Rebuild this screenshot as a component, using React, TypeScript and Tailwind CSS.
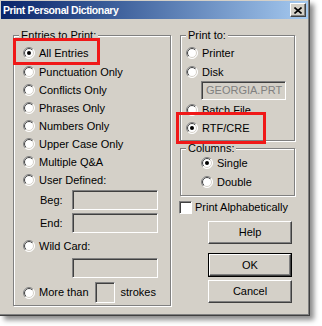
import React from 'react';

// Classic sunken radio button
const RadioDot: React.FC<{ checked?: boolean }> = ({ checked }) => (
  <svg width="12" height="12" viewBox="0 0 12 12" className="shrink-0">
    <defs>
      <linearGradient id="rb-outer" x1="0" y1="0" x2="1" y2="1">
        <stop offset="50%" stopColor="#808080" />
        <stop offset="50%" stopColor="#ffffff" />
      </linearGradient>
      <linearGradient id="rb-inner" x1="0" y1="0" x2="1" y2="1">
        <stop offset="50%" stopColor="#404040" />
        <stop offset="50%" stopColor="#d4d0c8" />
      </linearGradient>
    </defs>
    <circle cx="6" cy="6" r="5.5" fill="#fff" stroke="url(#rb-outer)" strokeWidth="1" />
    <circle cx="6" cy="6" r="4.5" fill="#fff" stroke="url(#rb-inner)" strokeWidth="1" />
    {checked && <circle cx="6" cy="6" r="2" fill="#000" />}
  </svg>
);

interface RadioProps {
  label: string;
  checked?: boolean;
  className?: string;
}

const Radio: React.FC<RadioProps> = ({ label, checked, className = '' }) => (
  <div className={`flex items-center h-[18px] gap-[4px] ${className}`}>
    <RadioDot checked={checked} />
    <span className="leading-none whitespace-nowrap">{label}</span>
  </div>
);

// Etched group box with caption
const GroupBox: React.FC<{ title: string; className?: string; children: React.ReactNode }> = ({
  title,
  className = '',
  children,
}) => (
  <div
    className={`relative border border-[#808080] shadow-[inset_1px_1px_0_#fff,1px_1px_0_#fff] ${className}`}
  >
    <span className="absolute -top-[7px] left-[5px] bg-[#d4d0c8] px-[2px] leading-[13px]">{title}</span>
    {children}
  </div>
);

// Disabled sunken edit field
const TextBox: React.FC<{ value?: string; className?: string }> = ({ value, className = '' }) => (
  <div
    className={`border-t border-l border-[#808080] border-r-[#fff] border-b-[#fff] border-r border-b shadow-[inset_1px_1px_0_#404040] bg-[#d4d0c8] text-[#808080] flex items-center pl-[4px] ${className}`}
  >
    {value}
  </div>
);

const Button: React.FC<{ label: string; isDefault?: boolean }> = ({ label, isDefault }) => {
  const face = (
    <div className="flex-1 flex items-center justify-center border-t border-l border-t-white border-l-white border-r border-b border-r-[#404040] border-b-[#404040] shadow-[inset_-1px_-1px_0_#808080] bg-[#d4d0c8]">
      {label}
    </div>
  );
  return isDefault ? (
    <div className="w-[84px] h-[24px] border border-black flex">{face}</div>
  ) : (
    <div className="w-[84px] h-[23px] flex">{face}</div>
  );
};

export default function App() {
  return (
    <div className="w-[322px] h-[326px] bg-white relative overflow-hidden font-['Liberation_Sans',Arial,sans-serif] text-[11px] text-black">
      {/* Dialog window */}
      <div className="w-[310px] h-[316px] bg-[#d4d0c8] flex flex-col pt-[1px] pl-[1px] border-r border-b border-[#404040] shadow-[inset_-1px_-1px_0_#808080,4px_4px_5px_rgba(0,0,0,0.45)]">
        {/* Title bar */}
        <div className="h-[18px] mr-[1px] flex items-center justify-between bg-gradient-to-r from-[#0a246a] to-[#a6caf0] pl-[2px] pr-[2px]">
          <span className="text-white font-bold text-[10.5px] tracking-[-0.4px] leading-none">
            Print Personal Dictionary
          </span>
          <div className="w-[16px] h-[14px] flex items-center justify-center bg-[#d4d0c8] border-t border-l border-t-white border-l-white border-r border-b border-r-[#404040] border-b-[#404040] shadow-[inset_-1px_-1px_0_#808080]">
            <svg width="8" height="7" viewBox="0 0 8 7">
              <path d="M0.5 0.5 L7.5 6.5 M7.5 0.5 L0.5 6.5" stroke="#000" strokeWidth="1.6" />
            </svg>
          </div>
        </div>

        {/* Body */}
        <div className="flex pt-[16px] pl-[12px]">
          {/* Entries to Print */}
          <GroupBox title="Entries to Print:" className="w-[158px] h-[271px] shrink-0">
            <div className="flex flex-col pt-[8px] pl-[9px]">
              <Radio label="All Entries" checked />
              <Radio label="Punctuation Only" className="mt-[1px]" />
              <Radio label="Conflicts Only" />
              <Radio label="Phrases Only" />
              <Radio label="Numbers Only" />
              <Radio label="Upper Case Only" className="h-[17px]" />
              <Radio label="Multiple Q&A" />
              <Radio label="User Defined:" className="h-[16px]" />
              <div className="flex items-center h-[20px] mt-[1px]">
                <span className="w-[17px]" />
                <span className="w-[32px]">Beg:</span>
                <TextBox className="w-[86px] h-[20px]" />
              </div>
              <div className="flex items-center h-[20px] mt-[3px]">
                <span className="w-[17px]" />
                <span className="w-[32px]">End:</span>
                <TextBox className="w-[86px] h-[20px]" />
              </div>
              <Radio label="Wild Card:" className="mt-[4px]" />
              <div className="flex h-[20px] mt-[3px] pl-[49px]">
                <TextBox className="w-[86px] h-[20px]" />
              </div>
              <div className="flex items-center h-[21px] mt-[4px] gap-[4px]">
                <RadioDot />
                <span>More than</span>
                <TextBox className="w-[20px] h-[21px] ml-[2px]" />
                <span className="ml-[2px]">strokes</span>
              </div>
            </div>
          </GroupBox>

          {/* Right column */}
          <div className="w-[115px] ml-[9px] flex flex-col shrink-0">
            <GroupBox title="Print to:" className="h-[106px]">
              <div className="flex flex-col pt-[8px] pl-[5px]">
                <Radio label="Printer" />
                <Radio label="Disk" className="mt-[1px]" />
                <div className="pl-[15px]">
                  <TextBox value="GEORGIA.PRT" className="w-[85px] h-[19px]" />
                </div>
                <Radio label="Batch File" className="mt-[1px]" />
                <Radio label="RTF/CRE" checked className="h-[16px]" />
              </div>
            </GroupBox>

            <GroupBox title="Columns:" className="h-[48px] mt-[7px]">
              <div className="flex flex-col pt-[5px] pl-[20px]">
                <Radio label="Single" checked />
                <Radio label="Double" className="mt-[1px]" />
              </div>
            </GroupBox>

            <div className="flex items-center h-[14px] mt-[4px] gap-[3px] -ml-[1px]">
              <div className="w-[13px] h-[13px] bg-white border-t border-l border-[#808080] border-r-white border-b-white border-r border-b shadow-[inset_1px_1px_0_#404040]" />
              <span>Print Alphabetically</span>
            </div>

            <div className="flex flex-col pl-[28px] mt-[7px]">
              <Button label="Help" />
              <div className="mt-[9px]">
                <Button label="OK" isDefault />
              </div>
              <div className="mt-[3px]">
                <Button label="Cancel" />
              </div>
            </div>
          </div>
        </div>
      </div>

      {/* Red annotation boxes */}
      <div className="absolute left-[13px] top-[38px] w-[87px] h-[27px] border-[3px] border-[#f01818]" />
      <div className="absolute left-[176px] top-[112px] w-[90px] h-[32px] border-[3px] border-[#f01818]" />
    </div>
  );
}
